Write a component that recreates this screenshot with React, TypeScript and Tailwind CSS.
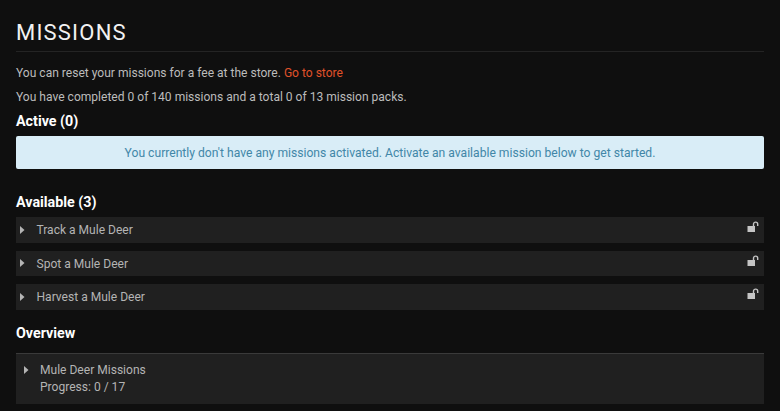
function Caret() {
  return (
    <svg width="5" height="8" viewBox="0 0 5 8" className="shrink-0 text-[#b5b5b5]">
      <path d="M0 0l4.5 4-4.5 4z" fill="currentColor" />
    </svg>
  );
}

function OpenLock() {
  return (
    <svg width="12" height="12" viewBox="0 0 12 12" className="text-[#c4c4c4]">
      <rect x="0.5" y="5" width="7.5" height="6" fill="currentColor" />
      <path d="M6.5 5V3.2a2.1 2.1 0 0 1 4.2 0V5" fill="none" stroke="currentColor" strokeWidth="1.4" />
    </svg>
  );
}

function Mission({ name }: { name: string }) {
  return (
    <div className="h-[25.5px] bg-[#202020] flex items-center pl-[4px] pr-[5px] text-[#b4b4b4]">
      <Caret />
      <span className="pl-[11.5px] pt-[1px] flex-1 text-[12.05px]">{name}</span>
      <div className="-mt-[5px]"><OpenLock /></div>
    </div>
  );
}

export default function App() {
  return (
    <div className="w-[780px] h-[411px] overflow-hidden bg-[#0f0f0f] px-[16px] pt-[20px] font-['Roboto',sans-serif] text-[12.05px] leading-[18px] text-[#bcbcbc]">
      <h1 className="text-[22px] leading-[26px] tracking-[1.2px] text-[#f2f2f2] pb-[5px] border-b border-[#242424]">MISSIONS</h1>

      <p className="mt-[12px]">You can reset your missions for a fee at the store. <a className="text-[#e0522a]">Go to store</a></p>
      <p className="mt-[6px]">You have completed 0 of 140 missions and a total 0 of 13 mission packs.</p>

      <h2 className="mt-[5px] text-[14.3px] leading-[20px] font-bold text-white">Active (0)</h2>
      <div className="mt-[5px] h-[33px] rounded-[2px] bg-[#d9edf7] text-[#4287a8] text-[12.14px] flex items-center justify-center">
        You currently don't have any missions activated. Activate an available mission below to get started.
      </div>

      <h2 className="mt-[23px] text-[14.3px] leading-[20px] font-bold text-white">Available (3)</h2>
      <div className="mt-[5px] flex flex-col gap-[8px]">
        <Mission name="Track a Mule Deer" />
        <Mission name="Spot a Mule Deer" />
        <Mission name="Harvest a Mule Deer" />
      </div>

      <h2 className="mt-[13px] text-[14.3px] leading-[20px] font-bold text-white">Overview</h2>
      <div className="mt-[10px] h-[51px] bg-[#202020] border-t border-[#3a3a3a] flex pl-[8px] pt-[8px] text-[#b4b4b4]">
        <div className="pt-[4px] w-[16px]"><Caret /></div>
        <div>
          <div className="leading-[17px]">Mule Deer Missions</div>
          <div className="leading-[17px]">Progress: 0 / 17</div>
        </div>
      </div>
    </div>
  );
}
